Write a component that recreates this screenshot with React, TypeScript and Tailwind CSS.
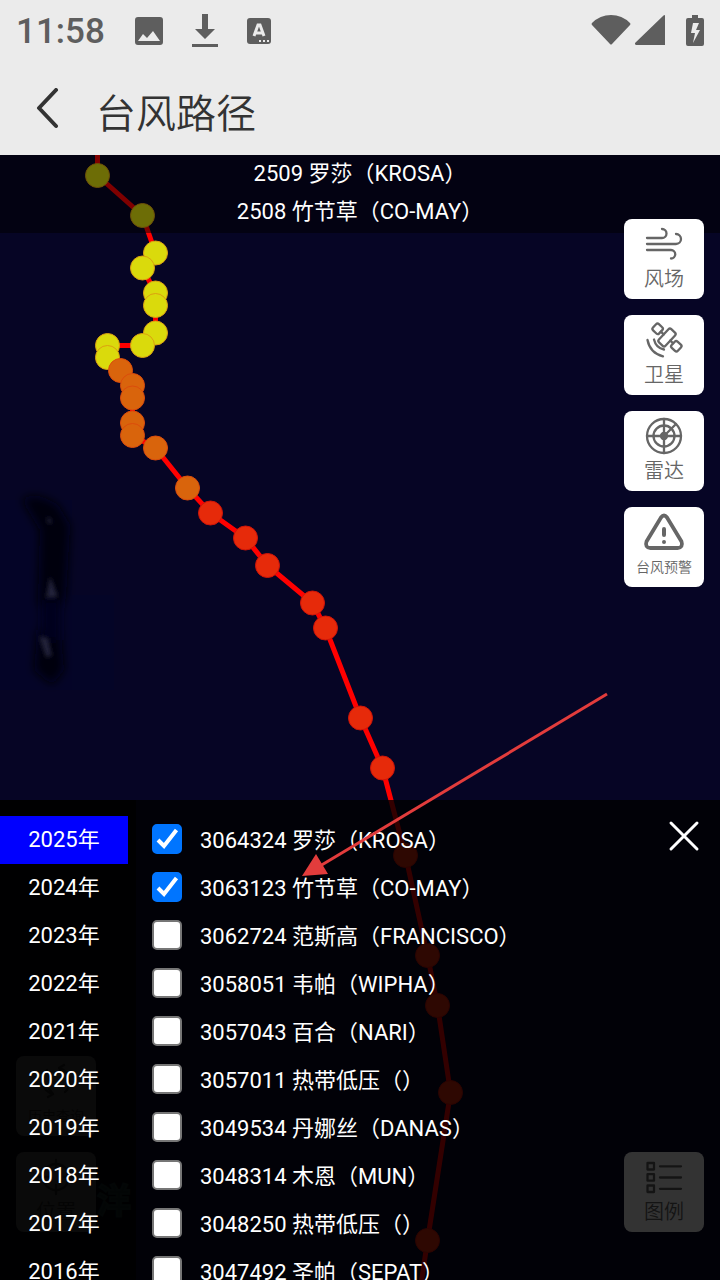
import { useState } from "react";
import type { ReactNode } from "react";

type Point = { x: number; y: number; level: "yellow" | "orange" | "red" };

const TRACK: Point[] = [
  { x: 97.5, y: 20.5, level: "yellow" },
  { x: 142.5, y: 60.5, level: "yellow" },
  { x: 155.5, y: 98, level: "yellow" },
  { x: 142.5, y: 113, level: "yellow" },
  { x: 155.5, y: 138, level: "yellow" },
  { x: 155.5, y: 150.5, level: "yellow" },
  { x: 155.5, y: 178, level: "yellow" },
  { x: 142.5, y: 190.5, level: "yellow" },
  { x: 107.5, y: 190.5, level: "yellow" },
  { x: 107.5, y: 202.5, level: "yellow" },
  { x: 120.5, y: 215.5, level: "orange" },
  { x: 132.5, y: 230.5, level: "orange" },
  { x: 132.5, y: 243, level: "orange" },
  { x: 132.5, y: 268, level: "orange" },
  { x: 132.5, y: 280.5, level: "orange" },
  { x: 155.5, y: 293, level: "orange" },
  { x: 187.5, y: 333, level: "orange" },
  { x: 210.5, y: 358, level: "red" },
  { x: 245.5, y: 383, level: "red" },
  { x: 267.5, y: 410.5, level: "red" },
  { x: 312.5, y: 448, level: "red" },
  { x: 325.5, y: 473, level: "red" },
  { x: 360.5, y: 563, level: "red" },
  { x: 382.5, y: 613, level: "red" },
  { x: 405.5, y: 700.5, level: "red" },
  { x: 427.5, y: 800.5, level: "red" },
  { x: 437.5, y: 850.5, level: "red" },
  { x: 450.5, y: 937.5, level: "red" },
  { x: 427.5, y: 1085.5, level: "red" },
];

const FILL = { yellow: "#dada0c", orange: "#d9640c", red: "#e62a0a" };
const EDGE = { yellow: "#dca010", orange: "#dc4c0c", red: "#d01408" };

const YEARS = [2025, 2024, 2023, 2022, 2021, 2020, 2019, 2018, 2017, 2016];

const TYPHOONS = [
  { id: "3064324", name: "罗莎（KROSA）" },
  { id: "3063123", name: "竹节草（CO-MAY）" },
  { id: "3062724", name: "范斯高（FRANCISCO）" },
  { id: "3058051", name: "韦帕（WIPHA）" },
  { id: "3057043", name: "百合（NARI）" },
  { id: "3057011", name: "热带低压（）" },
  { id: "3049534", name: "丹娜丝（DANAS）" },
  { id: "3048314", name: "木恩（MUN）" },
  { id: "3048250", name: "热带低压（）" },
  { id: "3047492", name: "圣帕（SEPAT）" },
];

function StatusBar() {
  return (
    <div className="flex h-[62px] items-center px-4 text-[#5e5e5e]">
      <span className="w-[118px] text-[35px] font-medium leading-none">11:58</span>
      <svg width="30" height="30" viewBox="0 0 30 30" fill="currentColor" aria-hidden="true">
        <path
          fillRule="evenodd"
          d="M4 1h22a3 3 0 0 1 3 3v22a3 3 0 0 1-3 3H4a3 3 0 0 1-3-3V4a3 3 0 0 1 3-3ZM4 25h22l-7-10-6 7-4-4Z"
        />
      </svg>
      <svg className="ml-7" width="26" height="36" viewBox="0 0 26 36" fill="currentColor" aria-hidden="true">
        <path d="M10 1h6v15h7L13 26 3 16h7ZM0 31h26v3H0Z" />
      </svg>
      <svg className="ml-7" width="26" height="28" viewBox="0 0 26 28" aria-hidden="true">
        <rect x="1" y="1" width="24" height="26" rx="3" fill="currentColor" />
        <path d="M8 19 12 8h2l4 11M10 16h6" fill="none" stroke="#ebebeb" strokeWidth="3" />
        <path d="M13 23h2v2h-2ZM17 23h2v2h-2ZM21 23h2v2h-2Z" fill="#ebebeb" />
      </svg>
      <div className="flex-1" />
      <svg width="40" height="34" viewBox="0 0 40 34" fill="currentColor" aria-hidden="true">
        <path d="M1 9Q9 1 20 1t19 8q1 1 0 2L21 30q-1 1-2 0L1 11q-1-1 0-2Z" />
      </svg>
      <svg className="ml-1" width="32" height="32" viewBox="0 0 32 32" fill="currentColor" aria-hidden="true">
        <path d="M28 1q2-2 2 0v29H1q-2-1-1-2Z" />
      </svg>
      <svg className="ml-[19px]" width="18" height="32" viewBox="0 0 18 32" fill="currentColor" aria-hidden="true">
        <path
          fillRule="evenodd"
          d="M6 0h6v3h4q2 0 2 2v24q0 2-2 2H2q-2 0-2-2V5q0-2 2-2h4ZM7 8 5 18h4l-2 10 7-13h-4l3-7Z"
        />
      </svg>
    </div>
  );
}

function MapButton({ label, small, children }: { label: string; small?: boolean; children: ReactNode }) {
  return (
    <button
      type="button"
      className="flex size-20 flex-col items-center rounded-lg bg-white pt-1 font-[350] text-[#666666]"
    >
      <svg
        width="42"
        height="42"
        viewBox="0 0 42 42"
        fill="none"
        stroke="#666666"
        strokeWidth="2.3"
        strokeLinecap="round"
        strokeLinejoin="round"
        aria-hidden="true"
      >
        {children}
      </svg>
      <span className={small ? "text-sm leading-7" : "text-xl leading-7"}>{label}</span>
    </button>
  );
}

function TrackLayer() {
  const line = ["97.5,-30", ...TRACK.map((p) => `${p.x},${p.y}`), "418,1150"].join(" ");
  return (
    <svg className="absolute inset-0 size-full" aria-hidden="true">
      <defs>
        <filter id="soft" x="-50%" y="-50%" width="200%" height="200%">
          <feGaussianBlur stdDeviation="5" />
        </filter>
        <filter id="faint" x="-50%" y="-50%" width="200%" height="200%">
          <feGaussianBlur stdDeviation="2" />
        </filter>
      </defs>
      <rect x="0" y="345" width="72" height="190" fill="#03042a" opacity="0.6" />
      <rect x="72" y="440" width="42" height="95" fill="#03042a" opacity="0.4" />
      <g filter="url(#soft)">
        <path d="M22 345Q35 335 58 350L70 370 66 440 60 454 38 450 40 375Z" fill="#010110" />
        <path d="M38 475 60 475 64 515 52 530 34 515Z" fill="#010110" />
        <path d="M42 445h18v40H42Z" fill="#02021a" />
      </g>
      <g filter="url(#faint)" fill="#24243a">
        <path d="M50 421 58 442 46 443ZM39 481 48 483 52 501 46 502ZM47 361l6 6-5 2Z" />
      </g>
      <text x="97" y="1058" fontSize="34" fontWeight="700" fill="#408888" stroke="#509898" strokeWidth="2">
        洋
      </text>
      <polyline points={line} fill="none" stroke="#ff0000" strokeWidth="5" strokeLinejoin="round" />
      {TRACK.map((p, i) => (
        <circle key={i} cx={p.x} cy={p.y} r="12" fill={FILL[p.level]} stroke={EDGE[p.level]} strokeWidth="1" />
      ))}
    </svg>
  );
}

export default function App() {
  const [year, setYear] = useState(2025);
  const [open, setOpen] = useState(true);
  const [picked, setPicked] = useState<string[]>(["3064324", "3063123"]);

  const toggle = (id: string) =>
    setPicked((list) => (list.includes(id) ? list.filter((v) => v !== id) : [...list, id]));

  return (
    <div className="flex h-screen flex-col overflow-hidden bg-[#ebebeb] font-[Roboto,'Noto_Sans_CJK_SC',sans-serif]">
      <header className="shrink-0">
        <StatusBar />
        <div className="flex h-[93px] items-center pl-8">
          <button type="button" aria-label="返回" className="mr-8 text-[#333333]">
            <svg width="32" height="42" viewBox="0 0 32 42" fill="none" aria-hidden="true">
              <path d="M24 2 7 20 24 38" stroke="currentColor" strokeWidth="4" strokeLinecap="round" strokeLinejoin="round" />
            </svg>
          </button>
          <h1 className="pt-1 font-['Noto_Sans_CJK_SC',sans-serif] text-[40px] font-[350] leading-none text-[#333333]">
            台风路径
          </h1>
        </div>
      </header>

      <main className="relative flex-1 overflow-hidden bg-[#060525]">
        <TrackLayer />

        <div className="absolute inset-x-0 top-0 bg-black/50 pb-0.5 text-center text-[22px] leading-[38px] text-white">
          <p>2509 罗莎（KROSA）</p>
          <p>2508 竹节草（CO-MAY）</p>
        </div>

        <div className="absolute right-4 top-16 flex flex-col gap-4">
          <MapButton label="风场">
            <path d="M4 15h15a4.5 4.5 0 0 0 0-9M4 21h29a5 5 0 0 0 0-10M4 27h24a4.2 4.2 0 0 1 0 8.5" />
          </MapButton>
          <MapButton label="卫星">
            <g transform="translate(24 18.5) rotate(43)">
              <rect x="-4.5" y="-9" width="9" height="18" rx="2" />
              <path d="M-4.5 0h-4M4.5 0h4" />
              <rect x="-17" y="-4.2" width="8.5" height="8.5" rx="2" />
              <rect x="8.5" y="-4.2" width="8.5" height="8.5" rx="2" />
            </g>
            <path d="M4.5 21Q7 34 20 37.3M11 20.5Q13 29 21 30.5" />
          </MapButton>
          <MapButton label="雷达">
            <circle cx="21" cy="21" r="17" />
            <circle cx="21" cy="21" r="10.5" />
            <circle cx="21" cy="21" r="3" fill="#666666" />
            <path d="M21 4v34M4 21h34M21 21 33 9" />
          </MapButton>
          <MapButton label="台风预警" small>
            <path d="M18 6.5q3-4 6 0l14.5 24q2 6-4 6.5H7.5q-6-.5-4-6.5Z" strokeWidth="3.8" />
            <path d="M21 18v6M21 31v0" strokeWidth="4" />
          </MapButton>
        </div>

        <div className="absolute bottom-12 left-4 flex flex-col gap-4">
          <MapButton label="历史查询" small>
            <path d="M12 10A14 14 0 0 0 18 34M18 34l-5 3M18 34l-4-5M30 32A14 14 0 0 0 24 8M24 8l5-3M24 8l4 5" />
          </MapButton>
          <MapButton label="位置">
            <circle cx="21" cy="21" r="13" />
            <path d="M21 4v9M21 29v9M4 21h9M29 21h9" />
          </MapButton>
        </div>

        <div className="absolute bottom-12 right-4">
          <MapButton label="图例">
            <path d="M4.5 7h6.5v6.5h-6.5ZM4.5 18.2h6.5v6.5h-6.5ZM4.5 29.5h6.5v6.5h-6.5ZM17 10.3h21M17 21.500h21M17 32.8h21" />
          </MapButton>
        </div>

        {open && (
          <section
            aria-label="台风列表"
            className="absolute inset-x-0 bottom-0 flex h-[37.5vh] overflow-hidden bg-black/80 text-[22px] text-white"
          >
            <nav aria-label="年份" className="w-34 shrink-0 bg-black/80 pr-2 pt-4">
              {YEARS.map((y) => (
                <button
                  key={y}
                  type="button"
                  onClick={() => setYear(y)}
                  className={`block h-12 w-full leading-[48px] ${y === year ? "bg-[#0000ff]" : ""}`}
                >
                  {y}年
                </button>
              ))}
            </nav>
            <ul className="min-w-0 flex-1 pl-4 pt-4">
              {TYPHOONS.map((t) => (
                <li key={t.id} className="h-12">
                  <label className="flex h-12 items-center">
                    <span className="relative mr-[18px] h-8 w-[30px] shrink-0">
                      <input
                        type="checkbox"
                        checked={picked.includes(t.id)}
                        onChange={() => toggle(t.id)}
                        className="peer block size-[30px] appearance-none rounded-[5px] border-2 border-[#767676] bg-white checked:border-[#0075ff] checked:bg-[#0075ff]"
                      />
                      <svg
                        className="pointer-events-none absolute left-0 top-0 hidden peer-checked:block"
                        width="30"
                        height="30"
                        viewBox="0 0 30 30"
                        fill="none"
                        aria-hidden="true"
                      >
                        <path d="M6 16 12 22 24.5 6" stroke="#ffffff" strokeWidth="4" />
                      </svg>
                    </span>
                    <span className="whitespace-nowrap">
                      {t.id} {t.name}
                    </span>
                  </label>
                </li>
              ))}
            </ul>
            <button type="button" aria-label="关闭" onClick={() => setOpen(false)} className="absolute right-5 top-5">
              <svg width="32" height="32" viewBox="0 0 32 32" aria-hidden="true">
                <path d="M3 3 29 29M29 3 3 29" stroke="#ffffff" strokeWidth="3" strokeLinecap="round" />
              </svg>
            </button>
          </section>
        )}

        <svg className="pointer-events-none absolute inset-0 size-full" aria-hidden="true">
          <path d="M607 539 320 711" stroke="#e23c3c" strokeWidth="3" />
          <path d="M302 721 316 699 328 719Z" fill="#e23c3c" />
        </svg>
      </main>
    </div>
  );
}
